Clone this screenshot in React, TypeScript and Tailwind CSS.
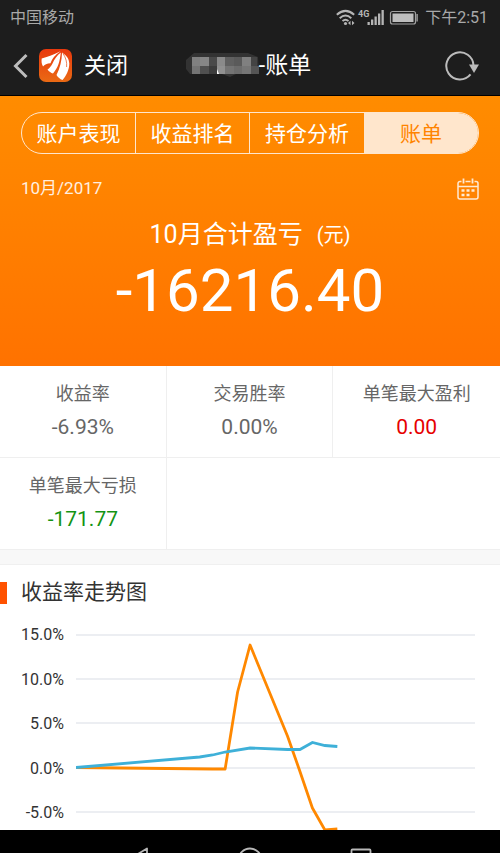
import React from "react";

const tabs = ["账户表现", "收益排名", "持仓分析", "账单"];

const stats = [
  { label: "收益率", value: "-6.93%", color: "text-[#666666]" },
  { label: "交易胜率", value: "0.00%", color: "text-[#666666]" },
  { label: "单笔最大盈利", value: "0.00", color: "text-[#e60000]" },
  { label: "单笔最大亏损", value: "-171.77", color: "text-[#149414]" },
];

const axisLabels = ["15.0%", "10.0%", "5.0%", "0.0%", "-5.0%"];
const gridLines = [10, 54, 98, 143, 187];

// Grey tiles that hide the account name
const mosaic = [
  { x: 6, y: 5, w: 8, h: 9, fill: "#808080" },
  { x: 14, y: 5, w: 9, h: 9, fill: "#868686" },
  { x: 23, y: 5, w: 8, h: 9, fill: "#4a4a4a" },
  { x: 31, y: 5, w: 8, h: 9, fill: "#8a8a8a" },
  { x: 39, y: 5, w: 9, h: 9, fill: "#606060" },
  { x: 48, y: 5, w: 8, h: 9, fill: "#5a5a5a" },
  { x: 56, y: 5, w: 9, h: 9, fill: "#808080" },
  { x: 65, y: 5, w: 6, h: 9, fill: "#444444" },
  { x: 6, y: 14, w: 8, h: 8, fill: "#747474" },
  { x: 14, y: 14, w: 9, h: 8, fill: "#505050" },
  { x: 23, y: 14, w: 8, h: 8, fill: "#3c3c3c" },
  { x: 31, y: 14, w: 8, h: 8, fill: "#909090" },
  { x: 39, y: 14, w: 9, h: 8, fill: "#747474" },
  { x: 48, y: 14, w: 8, h: 8, fill: "#6c6c6c" },
  { x: 56, y: 14, w: 9, h: 8, fill: "#767676" },
  { x: 65, y: 14, w: 8, h: 8, fill: "#555555" },
];

const StatusBar = () => (
  <div className="flex h-9 shrink-0 items-center justify-between pl-[10px] pr-3 text-base text-[#a9a9a9]">
    <span>中国移动</span>
    <div className="flex items-center">
      <svg width="82" height="18" viewBox="0 0 82 18" fill="none">
        {/* wifi */}
        <g stroke="#b5b5b5" strokeWidth="2">
          <path d="M.8 5.8Q9.500-2 18.200 5.800" />
          <path d="M3.700 9.200Q9.500 3.900 15.300 9.200" />
          <path d="M6.500 12Q9.500 9.500 12.500 12" />
        </g>
        <circle cx="9.500" cy="14.500" r="1.600" fill="#b5b5b5" />
        <path d="M12 14l2.500-2.300v4.600zM18.500 14L16 11.700v4.600z" fill="#b5b5b5" />
        <text x="22" y="8" fontSize="9" fontWeight="700" fill="#b5b5b5" fontFamily="Roboto">4G</text>
        {/* signal */}
        <g fill="#b5b5b5">
          <rect x="31.500" y="13" width="2.300" height="3" />
          <rect x="35" y="10.500" width="2.300" height="5.500" />
          <rect x="38.500" y="7.500" width="2.300" height="8.500" />
          <rect x="42" y="4.500" width="2.300" height="11.500" />
          <rect x="45.500" y="1" width="2.300" height="15" />
        </g>
        {/* battery */}
        <rect x="54.500" y="2.500" width="25" height="12.500" rx="2" stroke="#a0a0a0" strokeWidth="1.200" />
        <rect x="56.500" y="4.500" width="21" height="8.500" fill="#bdbdbd" />
        <rect x="80.400" y="5" width="1.400" height="7.500" fill="#a0a0a0" />
      </svg>
      <span className="ml-[7px]">下午2:51</span>
    </div>
  </div>
);

const Header = () => (
  <header className="grid h-[60px] shrink-0 grid-cols-[1fr_auto_1fr] items-center border-b border-black pl-[13px] pr-[21px] text-white">
    <div className="flex items-center">
      <button aria-label="返回">
        <svg width="16" height="26" viewBox="0 0 16 26" fill="none">
          <path d="M13.500 2L2.500 13l11 11" stroke="#bcbcbc" strokeWidth="3" />
        </svg>
      </button>
      <svg className="ml-[10px]" width="33" height="33" viewBox="0 0 33 33">
        <defs>
          <linearGradient id="logo" x1="0" y1="0" x2="0" y2="1">
            <stop offset="0" stopColor="#e8380d" />
            <stop offset="1" stopColor="#ea6a14" />
          </linearGradient>
        </defs>
        <rect width="33" height="33" rx="7" fill="url(#logo)" />
        <g fill="#fff">
          <path d="M2.700 9.500C8 8 14 6 21.500 2.300C16 6 13.500 9.500 11.500 14.200C8 14.300 5.500 15.500 4 17.500C2.600 15 2.300 12.500 2.700 9.500Z" />
          <path d="M21.800 3.500C18 6.500 15.500 10 13.500 14.500C12 17.300 10.500 19.200 8.500 20.500C10 22.500 12 24 14 24.500C19 19 21 12 21.800 3.500Z" />
          <path d="M23 3.500C22.800 12 21 19 17.500 26C19 28.500 21 30 23.500 31C27 27 30.300 21 30.300 14.500C30 9.500 27.500 6.500 23 3.500Z" />
        </g>
        <path d="M24 4.500C27 9 28 13 27.600 18" fill="none" stroke="#e84c10" strokeWidth=".7" />
      </svg>
      <button className="ml-3 text-[22px] leading-8">关闭</button>
    </div>
    <h1 className="flex items-center pl-[5px] text-[23px] font-normal leading-8">
      <svg width="73" height="27" viewBox="0 0 73 27" aria-hidden="true">
        <path d="M8 1H62L72 5L73 22H50L44 25L36 22H4L0 17V8Z" fill="#333333" />
        {mosaic.map((tile, index) => (
          <rect key={index} x={tile.x} y={tile.y} width={tile.w} height={tile.h} fill={tile.fill} />
        ))}
        <path d="M31 17l2 5h-2z" fill="#fff" />
      </svg>
      -账单
    </h1>
    <button aria-label="刷新" className="justify-self-end">
      <svg width="34" height="30" viewBox="0 0 34 30" fill="none">
        <path d="M28.500 14.500A13.600 13.600 0 1 0 25.500 23.400" stroke="#bcbcbc" strokeWidth="2" />
        <path d="M24 13.500h10L29 22z" fill="#bcbcbc" />
      </svg>
    </button>
  </header>
);

const Summary = () => (
  <section className="bg-linear-to-b from-[#ff8c00] to-[#ff7200] px-[21px] pb-[45px] pt-4 text-white">
    {/* Tabs */}
    <div className="grid h-[42px] grid-cols-4 overflow-hidden rounded-full border border-[#ffe6cc]">
      {tabs.map((tab, index) => (
        <button
          key={tab}
          className={`pt-0.5 text-[21px] leading-8 ${
            index === 3
              ? "bg-[#ffe6cc] text-[#ff8400]"
              : index === 2
                ? ""
                : "border-r border-[#ffe6cc]"
          }`}
        >
          {tab}
        </button>
      ))}
    </div>

    {/* Month */}
    <div className="mt-6 flex h-[22px] items-center justify-between">
      <span className="text-[17px] text-[#fff0e0]">10月/2017</span>
      <button aria-label="选择月份">
        <svg width="22" height="22" viewBox="0 0 22 22" fill="none" stroke="#ffe9d2">
          <path d="M4.500 3.500H3A2 2 0 0 0 1 5.500V19A2 2 0 0 0 3 21H19A2 2 0 0 0 21 19V5.500A2 2 0 0 0 19 3.500H17.500M8.500 3.500h5M1 8.500h20" strokeWidth="1.500" />
          <path d="M6.500.5v5M15.500.5v5" strokeWidth="1.800" />
          <path d="M4.500 12.500h3M9.500 12.500h3M14.500 12.500h3M4.500 17h3M9.500 17h3" strokeWidth="2.600" />
        </svg>
      </button>
    </div>

    {/* Total */}
    <p className="mt-5 flex h-[30px] items-center justify-center gap-[14px] text-[25px]">
      10月合计盈亏 <span className="text-xl">(元)</span>
    </p>
    <p className="mt-[11px] text-center text-[60px] leading-[60px]">-16216.40</p>
  </section>
);

const Stats = () => (
  <dl className="grid grid-cols-3 text-center">
    {stats.map((stat, index) => (
      <div
        key={stat.label}
        className={`border-b border-[#efefef] pb-[18px] pt-4 ${index === 2 ? "" : "border-r"}`}
      >
        <dt className="text-lg leading-6 text-[#666666]">{stat.label}</dt>
        <dd className={`mt-[9px] text-[21px] leading-6 ${stat.color}`}>{stat.value}</dd>
      </div>
    ))}
    <div className="col-span-2 border-b border-[#efefef]" />
  </dl>
);

const TrendChart = () => (
  <section>
    <div className="flex h-14 items-center">
      <span className="h-[22px] w-[7px] bg-[#ff5200]" />
      <h2 className="ml-[14px] text-[21px] font-normal text-[#333333]">收益率走势图</h2>
    </div>
    <div className="mt-1 flex h-[240px] pr-[25px]">
      <div className="flex h-[198px] w-16 shrink-0 flex-col justify-between text-right text-base leading-5 text-[#333333]">
        {axisLabels.map((label) => (
          <span key={label}>{label}</span>
        ))}
      </div>
      <svg className="ml-3 h-[240px] min-w-0 flex-1" viewBox="0 0 400 240" preserveAspectRatio="none" fill="none">
        {gridLines.map((y) => (
          <path key={y} d={`M0 ${y}H400`} stroke="#e6e9ee" strokeWidth="1.500" />
        ))}
        <path
          d="M0 142.500L137 144H149.500L162 67L174.500 20L212 111L224 145L237 183L249.500 205L262 204"
          stroke="#ff8800"
          strokeWidth="2.800"
          strokeLinejoin="round"
        />
        <path
          d="M0 142.500L124 132L137 130L149.500 127L174.500 123L212 124.500H224.500L237 117.500L249.500 120.500L262 121.500"
          stroke="#3eb0d8"
          strokeWidth="2.800"
        />
      </svg>
    </div>
  </section>
);

const NavBar = () => (
  <nav className="h-[23px] shrink-0 overflow-hidden bg-black">
    <div className="mx-auto grid w-2/3 grid-cols-3 justify-items-center pt-[17px]">
      <button aria-label="后退">
        <svg width="26" height="26" viewBox="0 0 26 26" fill="none" stroke="#b8b8b8" strokeWidth="1.800">
          <path d="M21 1.500V24L2 13Z" strokeLinejoin="round" />
        </svg>
      </button>
      <button aria-label="主页">
        <svg width="26" height="26" viewBox="0 0 26 26" fill="none" stroke="#b8b8b8" strokeWidth="1.800">
          <circle cx="13" cy="13" r="11.500" />
        </svg>
      </button>
      <button aria-label="最近任务">
        <svg width="26" height="26" viewBox="0 0 26 26" fill="none" stroke="#b8b8b8" strokeWidth="1.800">
          <rect x="3.500" y="2.500" width="19" height="19" rx="1" />
        </svg>
      </button>
    </div>
  </nav>
);

const App = () => {
  return (
    <div className="flex h-screen flex-col bg-[#1d1d1d] font-[Roboto,'Noto_Sans_CJK_SC',sans-serif]">
      <StatusBar />
      <Header />
      <main className="min-h-0 flex-1 overflow-hidden bg-white">
        <Summary />
        <Stats />
        <div className="h-[15px] border-b border-[#f0f0f0] bg-[#f8f8f8]" />
        <TrendChart />
      </main>
      <NavBar />
    </div>
  );
};

export default App;
